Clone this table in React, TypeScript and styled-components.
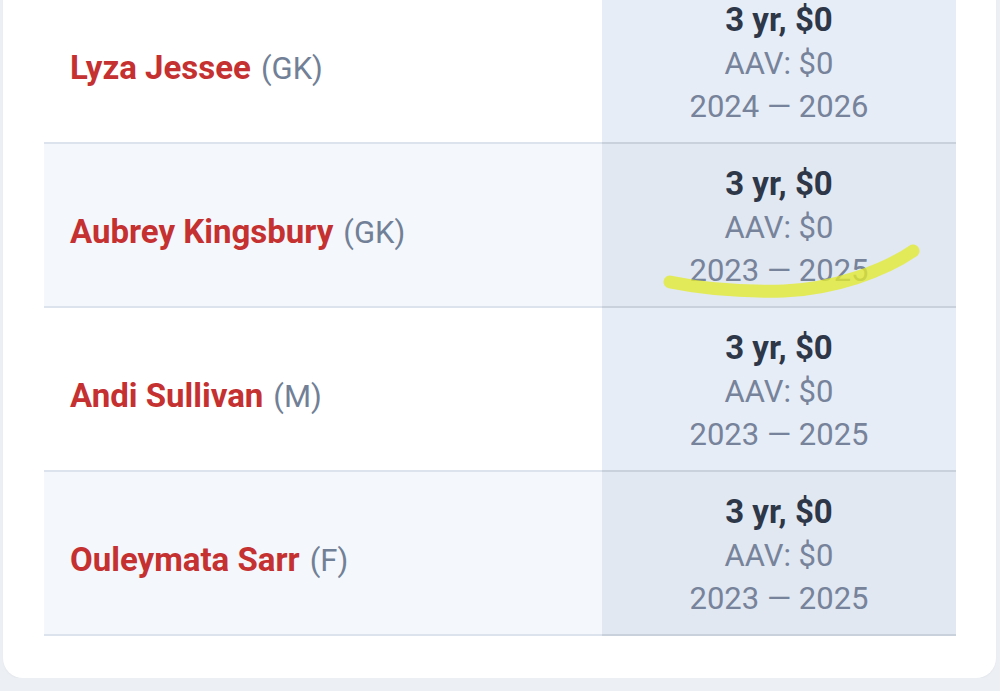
import * as React from 'react';
import styled, {createGlobalStyle} from 'styled-components';

interface IContract {
    name: string;
    pos: string;
    years: number;
    total: string;
    aav: string;
    start: number;
    end: number;
    marked?: boolean;
}

const contracts: IContract[] = [
    {name: "Lyza Jessee", pos: "GK", years: 3, total: "$0", aav: "$0", start: 2024, end: 2026},
    {name: "Aubrey Kingsbury", pos: "GK", years: 3, total: "$0", aav: "$0", start: 2023, end: 2025, marked: true},
    {name: "Andi Sullivan", pos: "M", years: 3, total: "$0", aav: "$0", start: 2023, end: 2025},
    {name: "Ouleymata Sarr", pos: "F", years: 3, total: "$0", aav: "$0", start: 2023, end: 2025},
];

const GlobalStyle = createGlobalStyle`
    html {
        overflow: hidden;
        background: #eceff3;
    }
    body {
        margin: 0;
        padding: 0;
        font-family: Roboto, "Liberation Sans", sans-serif;
    }
`;

const Page = styled.div`
    width: 1000px;
    padding: 0 4px 0 3px;
    box-sizing: border-box;
`;

const Card = styled.div`
    margin-top: -41px;
    background: #ffffff;
    border-radius: 0 0 20px 20px;
    padding: 21px 40px 42px 41px;
    box-shadow: 0 1px 2px rgba(0, 0, 0, 0.04);
`;

const Table = styled.div`
    display: flex;
    flex-direction: column;
`;

const Row = styled.div<{ $striped: boolean }>`
    position: relative;
    display: grid;
    grid-template-columns: 558px 354px;
    height: 164px;
    background: ${p => p.$striped ? "#f4f7fb" : "#ffffff"};
    border-bottom: 2px solid #dde3ec;
    box-sizing: border-box;
`;

const NameCell = styled.div`
    display: flex;
    align-items: baseline;
    align-self: center;
    padding-left: 26px;
    padding-top: 12px;
`;

const PlayerName = styled.span`
    color: #c53030;
    font-size: 33px;
    font-weight: 700;
    margin-right: 10px;
`;

const Position = styled.span`
    color: #718096;
    font-size: 31px;
    font-weight: 400;
`;

const ContractCell = styled.div<{ $striped: boolean }>`
    display: flex;
    flex-direction: column;
    align-items: center;
    justify-content: center;
    padding-top: 5px;
    background: ${p => p.$striped ? "#e1e8f2" : "#e6edf7"};
    border-bottom: 2px solid #c9d1dd;
    margin-bottom: -2px;
    line-height: 43.5px;
`;

const Terms = styled.div`
    color: #2d3748;
    font-size: 33px;
    font-weight: 700;
`;

const Detail = styled.div`
    color: #77839a;
    font-size: 31px;
    font-weight: 400;
`;

const Highlight = styled.svg`
    position: absolute;
    left: 610px;
    top: 95px;
    pointer-events: none;
`;

const Marker = () => (
    <Highlight width="280" height="70" viewBox="0 0 280 70">
        <path d="M16 43 C 50 50, 90 53, 130 52 C 180 50, 230 32, 259 12"
              fill="none" stroke="#e3ea2e" strokeOpacity="0.78" strokeWidth="13" strokeLinecap="round"/>
    </Highlight>
);

export default function App() {
    return (
        <Page>
            <GlobalStyle/>
            <Card>
                <Table>
                    {contracts.map((c, i) => (
                        <Row key={c.name} $striped={i % 2 === 1}>
                            <NameCell>
                                <PlayerName>{c.name}</PlayerName>
                                <Position>({c.pos})</Position>
                            </NameCell>
                            <ContractCell $striped={i % 2 === 1}>
                                <Terms>{c.years} yr, {c.total}</Terms>
                                <Detail>AAV: {c.aav}</Detail>
                                <Detail>{c.start} — {c.end}</Detail>
                            </ContractCell>
                            {c.marked && <Marker/>}
                        </Row>
                    ))}
                </Table>
            </Card>
        </Page>
    );
}
